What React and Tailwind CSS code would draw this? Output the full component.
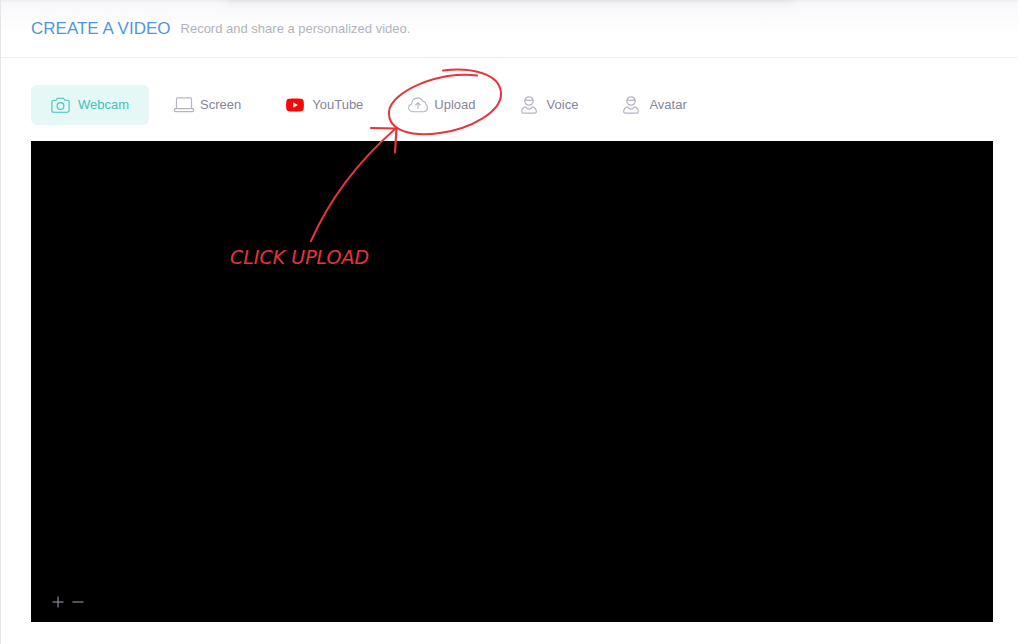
import React, { useState } from "react";

const CameraIcon = () => (
  <svg width="19" height="17" viewBox="0 0 19 17" fill="none" stroke="currentColor" strokeWidth="1.1" strokeLinejoin="round">
    <path d="M2.5 3.2h2.7l1.3-2h6l1.3 2h2.7q1.6 0 1.6 1.6v8.8q0 1.6-1.6 1.6h-14q-1.6 0-1.6-1.6V4.8q0-1.6 1.6-1.6z" />
    <circle cx="9.5" cy="9" r="3.4" />
  </svg>
);

const LaptopIcon = () => (
  <svg width="20" height="16" viewBox="0 0 20 16" fill="none" stroke="currentColor" strokeWidth="1.2" strokeLinejoin="round">
    <path d="M2.5 11.5V2c0-.8.4-1.2 1.2-1.2h12.6c.8 0 1.2.4 1.2 1.2v9.5" />
    <path d="M.6 11.6h18.8v1.8c0 .8-.5 1.3-1.3 1.3H1.9c-.8 0-1.3-.5-1.3-1.3z" />
  </svg>
);

const YouTubeIcon = () => (
  <svg width="18" height="14" viewBox="0 0 18 14">
    <path
      d="M3 .7C6 .3 12 .3 15 .7c1.6.2 2.4.9 2.6 2.3.4 2.4.4 5.6 0 8-.2 1.4-1 2.1-2.6 2.3-3 .4-9 .4-12 0C1.4 13.1.6 12.4.4 11 0 8.6 0 5.4.4 3 .6 1.6 1.4.9 3 .7z"
      fill="#f90606"
    />
    <path d="M7.2 4.3v5.4L11.8 7z" fill="#fff" />
  </svg>
);

const CloudIcon = () => (
  <svg width="20" height="16" viewBox="0 0 20 16" fill="none" stroke="currentColor" strokeWidth="1.1" strokeLinecap="round" strokeLinejoin="round">
    <path d="M5 14.8C2.5 14.8.6 13 .6 10.8c0-1.9 1.2-3.3 3-3.8C3.6 3.5 6.2.9 9.4.9c2.5 0 4.5 1.3 5.4 3.5 1.9-.1 2.9 1 2.9 2.8 1.1.7 1.7 1.9 1.7 3.3 0 2.5-1.8 4.3-4.3 4.3z" />
    <path d="M10 11.4V5.8M7.6 8 10 5.6 12.4 8" />
  </svg>
);

const PersonIcon = () => (
  <svg width="16" height="18" viewBox="0 0 16 18" fill="none" stroke="currentColor" strokeWidth="1.2" strokeLinecap="round" strokeLinejoin="round">
    <circle cx="8" cy="5" r="4.2" />
    <path d="M4.2 4.2c2.8.2 5.2.2 7.6 0" />
    <path d="M4.8 10.8C2.2 11.4.7 13 .7 15.4q0 1.7 1.6 1.7h11.4q1.6 0 1.6-1.7c0-2.4-1.5-4-4.1-4.6-.8 1.6-1.8 2.4-3.2 2.4s-2.4-.8-3.2-2.4z" />
  </svg>
);

const tabs = [
  { name: "Webcam", icon: CameraIcon, gap: "gap-2" },
  { name: "Screen", icon: LaptopIcon, gap: "gap-1.5" },
  { name: "YouTube", icon: YouTubeIcon, gap: "gap-2" },
  { name: "Upload", icon: CloudIcon, gap: "gap-1.5" },
  { name: "Voice", icon: PersonIcon, gap: "gap-2.5" },
  { name: "Avatar", icon: PersonIcon, gap: "gap-2.5" },
];

// hand-drawn hint that lies over the tabs and the video
const UploadHint = () => (
  <div className="absolute top-0.5 left-[229px] w-[280px] pointer-events-none text-[#e8343a]">
    <svg width="280" height="185" viewBox="230 60 280 185" fill="none" stroke="currentColor" strokeLinecap="round" strokeLinejoin="round">
      <path
        d="M443 70.5C470 67 500 73 501 93C502 112 470 129 440 133C412 137 388 131 389 112C390 92 440 70 477 75.5"
        strokeWidth="2"
      />
      <path d="M371 128l25.500.5-1.500 24" strokeWidth="2.2" />
      <path d="M395 129C360 160 330 198 311 241" strokeWidth="2" />
    </svg>
    <p className="font-['DejaVu_Sans',sans-serif] italic text-[19px] leading-6">
      CLICK UPLOAD
    </p>
  </div>
);

const App = () => {
  const [active, setActive] = useState("Webcam");
  const [zoom, setZoom] = useState(1);

  return (
    <div className="relative min-h-screen overflow-hidden bg-white mr-1.5 border-l border-[#e6e6e8] font-['Liberation_Sans',Arial,sans-serif]">
      <div className="absolute -top-2 left-56 right-56 h-3 bg-black/5 blur-xs"></div>
      <header className="flex items-center gap-2.5 h-[58px] pl-[30px] pr-6 pb-0.5 border-t-2 border-t-[#f0f0f3] border-b border-b-[#f0f0f2] bg-linear-to-b from-[#f8f8fb] to-white to-60%">
        <h1 className="text-[17px] leading-6 text-[#4f97dc]">CREATE A VIDEO</h1>
        <p className="text-[13px] leading-6 text-[#b3b3bd]">
          Record and share a personalized video.
        </p>
      </header>

      <main className="relative pl-[30px] pr-[25px] pt-[27px] pb-5">
        <nav className="flex flex-wrap gap-[5px]">
          {tabs.map(({ name, icon: Icon, gap }) => (
            <button
              key={name}
              onClick={() => setActive(name)}
              className={`flex items-center h-10 px-5 rounded-md text-[13px] leading-5 cursor-pointer ${gap} ${
                active === name
                  ? "bg-[#e6f8f6] text-[#3fc4b8]"
                  : "text-[#85859a]"
              }`}
            >
              <span className={active === name ? "" : "text-[#b4b4c3]"}>
                <Icon />
              </span>
              {name}
            </button>
          ))}
        </nav>

        <div className="flex items-end mt-4 aspect-2/1 bg-black overflow-hidden">
          <div className="flex gap-2 pl-[21px] pb-3.5 text-[#a3a0b4]">
            <button aria-label="Zoom in" onClick={() => setZoom(zoom + 1)} className="cursor-pointer">
              <svg width="12" height="12" viewBox="0 0 12 12" stroke="currentColor">
                <path d="M.5 6h11M6 .5v11" />
              </svg>
            </button>
            <button aria-label="Zoom out" onClick={() => setZoom(zoom - 1)} className="cursor-pointer">
              <svg width="12" height="12" viewBox="0 0 12 12" stroke="currentColor">
                <path d="M.5 6h11" />
              </svg>
            </button>
          </div>
        </div>
        <UploadHint />
      </main>
    </div>
  );
};

export default App;
